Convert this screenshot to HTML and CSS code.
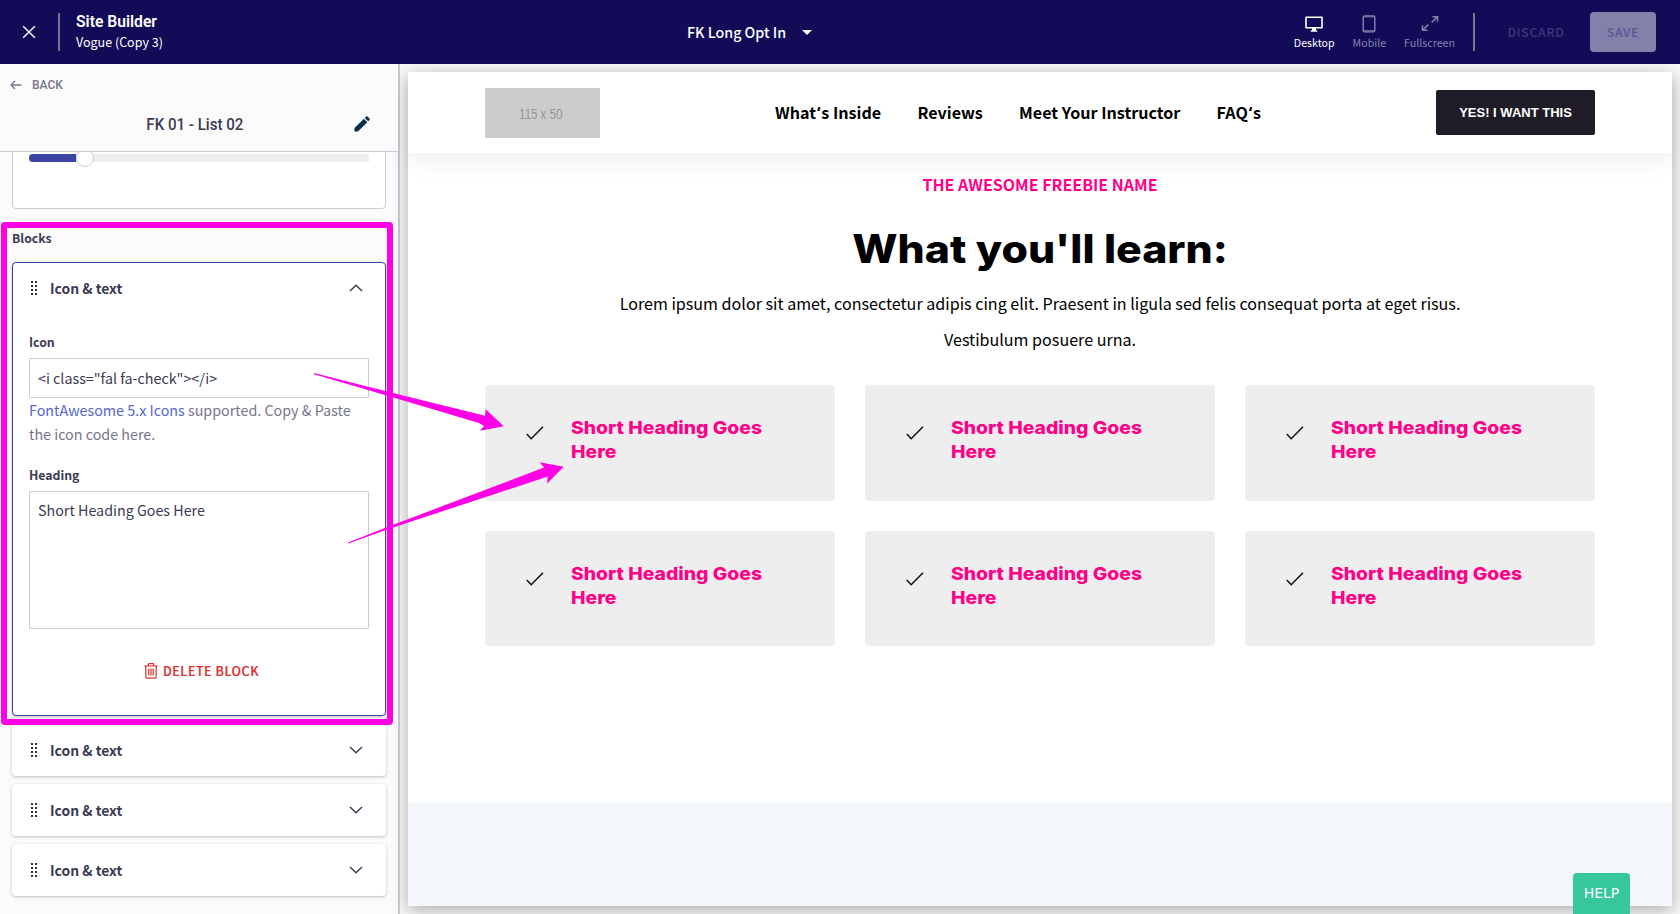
FILE: index.html
```html
<!DOCTYPE html>
<html lang="en">
<head>
<meta charset="utf-8">
<title>Site Builder</title>
<link rel="stylesheet" href="styles.css">
</head>
<body>
<svg class="sprite" width="0" height="0">
  <symbol id="check" viewBox="0 0 18 14"><path d="M.8 8l4.400 4.700L17 .8" fill="none" stroke="#111" stroke-width="1.500"/></symbol>
  <symbol id="chevron" viewBox="0 0 14 8"><path d="M1 1l6 5.800L13 1" fill="none" stroke="#3b3a52" stroke-width="1.400"/></symbol>
  <symbol id="grip" viewBox="0 0 6 14"><path d="M0 0h2v2H0zM4 0h2v2H4zM0 4h2v2H0zM4 4h2v2H4zM0 8h2v2H0zM4 8h2v2H4zM0 12h2v2H0zM4 12h2v2H4z" fill="#2f2e41"/></symbol>
</svg>
<header class="topbar">
  <svg class="close" width="14" height="14" viewBox="0 0 14 14"><path d="M1.200 1.200l11.600 11.600M12.800 1.200L1.200 12.800" stroke="#fff" stroke-width="1.400"/></svg>
  <i class="divider"></i>
  <div class="brand"><b class="brand-name">Site Builder</b><span class="brand-sub">Vogue (Copy 3)</span></div>
  <div class="page-select"><span>FK Long Opt In</span><i class="caret"></i></div>
  <nav class="devices">
    <a class="device active"><svg width="18" height="18" viewBox="0 0 18 18"><path d="M1 2.200h16v10.600H1z" fill="none" stroke="#fff" stroke-width="1.600" stroke-linejoin="round"/><path d="M7 13h4v2.300h1.200v1.400H5.800v-1.400H7z" fill="#fff"/></svg><span>Desktop</span></a>
    <a class="device"><svg width="18" height="18" viewBox="0 0 18 18"><rect x="3.200" y=".9" width="11.600" height="16" rx="1.400" fill="none" stroke="#8582ac" stroke-width="1.400"/><path d="M3 1.800h12M3 15.800h12" stroke="#8582ac" stroke-width="1"/></svg><span>Mobile</span></a>
    <a class="device"><svg width="18" height="18" viewBox="0 0 18 18"><path d="M11.500 1.700h5v5M16 2.200l-5.300 5.200M6.500 15.300h-5v-5M2 14.800l5.300-5.200" fill="none" stroke="#8582ac" stroke-width="1.500"/></svg><span>Fullscreen</span></a>
  </nav>
  <i class="divider"></i>
  <span class="discard">DISCARD</span>
  <button class="save">SAVE</button>
</header>
<div class="workspace">
  <aside class="sidebar">
    <div class="side-head">
      <div class="back"><svg width="12" height="10" viewBox="0 0 12 10"><path d="M11.500 5H1M5 1L1 5l4 4" fill="none" stroke="#76758c" stroke-width="1.300"/></svg><span>BACK</span></div>
      <div class="side-title"><span class="side-name">FK 01 - List 02</span><svg class="pencil" width="16" height="16" viewBox="0 0 16 16"><path d="M.5 15.500v-3.400L9.900 2.800l3.400 3.400-9.400 9.300zM10.800 1.900L12.200.6q.7-.5 1.300 0l2 2q.6.7 0 1.300l-1.300 1.400z" fill="#04304d"/></svg></div>
    </div>
    <div class="slider-card"><div class="track"><i class="fill"></i><i class="thumb"></i></div></div>
    <h3 class="blocks-title">Blocks</h3>
    <section class="block open">
      <div class="block-head"><svg width="6" height="14"><use href="#grip"/></svg><span class="block-name">Icon &amp; text</span><svg class="chev up" width="14" height="8"><use href="#chevron"/></svg></div>
      <label class="field-label">Icon</label>
      <div class="input">&lt;i class="fal fa-check"&gt;&lt;/i&gt;</div>
      <p class="hint"><a>FontAwesome 5.x Icons</a> supported. Copy &amp; Paste<br>the icon code here.</p>
      <label class="field-label">Heading</label>
      <div class="input area">Short Heading Goes Here</div>
      <div class="delete"><svg width="14" height="16" viewBox="0 0 14 16"><path d="M.3 3h13.400M4.300 3V1.500q0-.8.800-.8h3.800q.8 0 .8.800V3M1.800 3v11q0 1.200 1.200 1.200h8q1.200 0 1.200-1.200V3M4.800 5.500v7M7 5.500v7M9.200 5.500v7" fill="none" stroke="#d92f2f" stroke-width="1.200"/></svg><span>DELETE BLOCK</span></div>
    </section>
    <section class="block"><div class="block-head"><svg width="6" height="14"><use href="#grip"/></svg><span class="block-name">Icon &amp; text</span><svg class="chev" width="14" height="8"><use href="#chevron"/></svg></div></section>
    <section class="block"><div class="block-head"><svg width="6" height="14"><use href="#grip"/></svg><span class="block-name">Icon &amp; text</span><svg class="chev" width="14" height="8"><use href="#chevron"/></svg></div></section>
    <section class="block"><div class="block-head"><svg width="6" height="14"><use href="#grip"/></svg><span class="block-name">Icon &amp; text</span><svg class="chev" width="14" height="8"><use href="#chevron"/></svg></div></section>
  </aside>
  <main class="preview">
    <div class="site">
      <header class="site-head">
        <div class="logo"><span>115 x 50</span></div>
        <nav class="site-nav"><a>What<span class="quote">‘</span>s Inside</a><a>Reviews</a><a>Meet Your Instructor</a><a>FAQ<span class="quote">‘</span>s</a></nav>
        <a class="cta">YES! I WANT THIS</a>
      </header>
      <section class="learn">
        <p class="kicker">THE AWESOME FREEBIE NAME</p>
        <h1 class="headline">What you'll learn:</h1>
        <p class="lead">Lorem ipsum dolor sit amet, consectetur adipis cing elit. Praesent in ligula sed felis consequat porta at eget risus.<br>Vestibulum posuere urna.</p>
        <div class="cards">
          <div class="card"><svg width="18" height="14"><use href="#check"/></svg><h4>Short Heading Goes<br>Here</h4></div>
          <div class="card"><svg width="18" height="14"><use href="#check"/></svg><h4>Short Heading Goes<br>Here</h4></div>
          <div class="card"><svg width="18" height="14"><use href="#check"/></svg><h4>Short Heading Goes<br>Here</h4></div>
          <div class="card"><svg width="18" height="14"><use href="#check"/></svg><h4>Short Heading Goes<br>Here</h4></div>
          <div class="card"><svg width="18" height="14"><use href="#check"/></svg><h4>Short Heading Goes<br>Here</h4></div>
          <div class="card"><svg width="18" height="14"><use href="#check"/></svg><h4>Short Heading Goes<br>Here</h4></div>
        </div>
      </section>
      <section class="next-section"></section>
    </div>
  </main>
</div>
<div class="help">HELP</div>
<div class="marker-box"></div>
<svg class="arrows" width="1680" height="914" viewBox="0 0 1680 914"><path d="M314 373L390 392.300l95 23.400.7-6.400 18 17-23.700 4.400 4-4.700-5-3-89-26.500L314 374.200zM348 542.400L390 526l154-58.500-4.300-5.200 24 4.400-16.700 17 .8-7.200L390 528.600 348.300 543.500z" fill="#ff00e6"/></svg>
</body>
</html>
```
FILE: styles.css
```css
* { box-sizing: border-box; }
body { margin: 0; height: 914px; overflow: hidden; position: relative; font-family: "Noto Sans CJK SC", "Noto Sans", sans-serif; color: #3b3a52; background: #f8f8f8; }
h1, h3, h4, p { margin: 0; }
span { white-space: nowrap; }
svg { display: block; flex: none; }
.sprite { position: absolute; }
.topbar { height: 64px; background: #120c58; display: flex; align-items: center; padding: 0 24px 0 22px; color: #fff; }
.divider { width: 2px; height: 38px; background: #76748c; flex: none; }
.close { margin-right: 22px; }
.brand { width: 627px; padding: 0 0 2px 16px; }
.brand-name { display: block; font: 600 17px/21px Roboto, sans-serif; transform: scaleX(.922); transform-origin: 0 50%; }
.brand-sub { display: block; font-size: 12.5px; line-height: 20px; }
.page-select { flex: 1; display: flex; align-items: center; font-size: 14.25px; line-height: 20px; font-weight: 500; }
.caret { margin-left: 16px; border: 5px solid transparent; border-top-color: #fff; border-bottom: 0; }
.devices { display: flex; gap: 18px; margin-right: 18px; }
.device { display: flex; flex-direction: column; align-items: center; gap: 2px; padding-top: 1px; font-size: 10.65px; line-height: 16px; color: #8582ac; }
.device.active { color: #fff; }
.discard { width: 115px; padding-left: 7px; text-align: center; font-size: 12.3px; font-weight: 500; letter-spacing: .7px; color: #3d3979; }
.save { width: 66px; height: 40px; padding: 0; border: 0; border-radius: 4px; background: #8380aa; color: #5a5694; font: 500 12.3px "Noto Sans CJK SC", sans-serif; letter-spacing: .7px; }
.workspace { display: flex; height: 850px; }
.sidebar { width: 400px; border-right: 2px solid #cbcad9; background: #fbfbfb; padding: 0 12px; overflow: hidden; }
.side-head { position: relative; z-index: 1; height: 88px; margin: 0 -12px; background: #fbfbfb; border-bottom: 1px solid #cbcad9; }
.back { display: flex; gap: 10px; align-items: center; padding: 11px 0 0 10px; font: 500 12px/20px Roboto, sans-serif; color: #76758c; }
.side-title { display: flex; align-items: center; justify-content: flex-end; padding: 17px 28px 0 0; font: 500 17px/24px Roboto, sans-serif; }
.side-name { transform: scaleX(.887); transform-origin: 100% 50%; }
.pencil { margin-left: 110.5px; }
.slider-card { height: 80px; margin-top: -23px; padding: 24px 16px; background: #fff; border: 1px solid #cbcad9; border-radius: 4px; }
.track { height: 8px; background: #eee; display: flex; align-items: center; }
.fill { width: 47px; height: 8px; background: #3c44a3; border-radius: 4px 0 0 4px; }
.thumb { width: 18px; height: 18px; border-radius: 50%; border: 1px solid #cbcad9; background: #fff; }
.blocks-title { font-size: 12.2px; line-height: 20px; font-weight: 700; margin: 19px 0 14px; }
.block { height: 52px; margin-bottom: 8px; background: #fff; border-radius: 4px; padding: 0 17px; box-shadow: 0 1px 3px rgba(0,0,0,.25); }
.block.open { height: 454px; border: 1px solid #3c44a3; padding: 0 16px; }
.block-head { height: 52px; display: flex; align-items: center; padding: 0 6px 0 2px; }
.open .block-head { height: 50px; }
.block-name { flex: 1; margin-left: 13px; font-size: 13.9px; line-height: 20px; font-weight: 700; }
.up { transform: rotate(180deg); }
.field-label { display: block; font-size: 12.3px; font-weight: 700; line-height: 20px; }
.open .field-label { margin-top: 19px; }
.input { height: 40px; margin-top: 6px; border: 1px solid #cbcad9; border-radius: 1px; padding: 0 8px; font-size: 14.3px; line-height: 38px; }
.area { height: 138px; line-height: 36px; }
.hint { font-size: 14.32px; line-height: 24px; color: #76758c; }
.hint a { color: #5566cc; }
.delete { display: flex; gap: 5px; justify-content: center; align-items: center; padding-left: 5px; margin-top: 32px; font-size: 12.5px; line-height: 20px; font-weight: 500; letter-spacing: .55px; color: #d92f2f; -webkit-text-stroke: .2px #d92f2f; }
.preview { flex: 1; padding: 8px; }
.site { height: 834px; display: flex; flex-direction: column; background: #fff; box-shadow: 0 4px 16px rgba(0,0,0,.3); color: #000; }
.site-head { height: 81px; flex: none; display: flex; align-items: center; padding: 0 77px; box-shadow: 0 10px 20px rgba(0,0,0,.06); }
.logo { width: 115px; height: 50px; background: #ccc; color: #969696; display: flex; align-items: center; justify-content: center; font: 14px/20px "Liberation Sans", sans-serif; margin-top: 1px; }
.logo span { transform: scaleX(.82); padding: 2px 4px 0 0; }
.site-nav { flex: 1; display: flex; gap: 36.3px; padding: 0 0 1px 175px; font-size: 16.1px; line-height: 24px; font-weight: 700; }
.quote { font-family: "Noto Sans", sans-serif; line-height: 1; padding: 0 .9px; }
.cta { width: 159px; height: 45px; background: #201c27; border-radius: 2px; color: #fff; font: bold 13px/45px "Liberation Sans", sans-serif; text-align: center; }
.learn { flex: 1; text-align: center; padding: 19px 77px 0; }
.kicker { font-size: 16px; line-height: 24px; font-weight: 700; color: #ff0089; }
.headline { font: 800 39px/48px Inter, sans-serif; margin-top: 29px; transform: scaleX(1.098); }
.lead { font-size: 16.1px; line-height: 36px; margin-top: 12px; }
.cards { display: grid; grid-template-columns: repeat(3, 350px); grid-auto-rows: 115.500px; gap: 30px; margin-top: 28px; text-align: left; }
.card { background: #eee; border-radius: 4px; display: flex; padding: 31px 41px; gap: 26.6px; }
.card svg { margin-top: 10px; }
.card h4 { font: 800 18px/24px Inter, sans-serif; color: #ff0089; white-space: nowrap; transform: scaleX(1.076); transform-origin: 0 0; }
.next-section { height: 104px; background: #f3f6fb; }
.help { position: absolute; left: 1573px; top: 873px; width: 57px; height: 41px; background: #36c79b; border-radius: 4px 4px 0 0; color: #fff; font: 14px/40px "DejaVu Sans", sans-serif; text-align: center; }
.marker-box { position: absolute; left: 1px; top: 222px; width: 392px; height: 503px; border: 6px solid #ff00e6; border-radius: 4px; z-index: 2; }
.arrows { position: absolute; left: 0; top: 0; z-index: 3; }
```
